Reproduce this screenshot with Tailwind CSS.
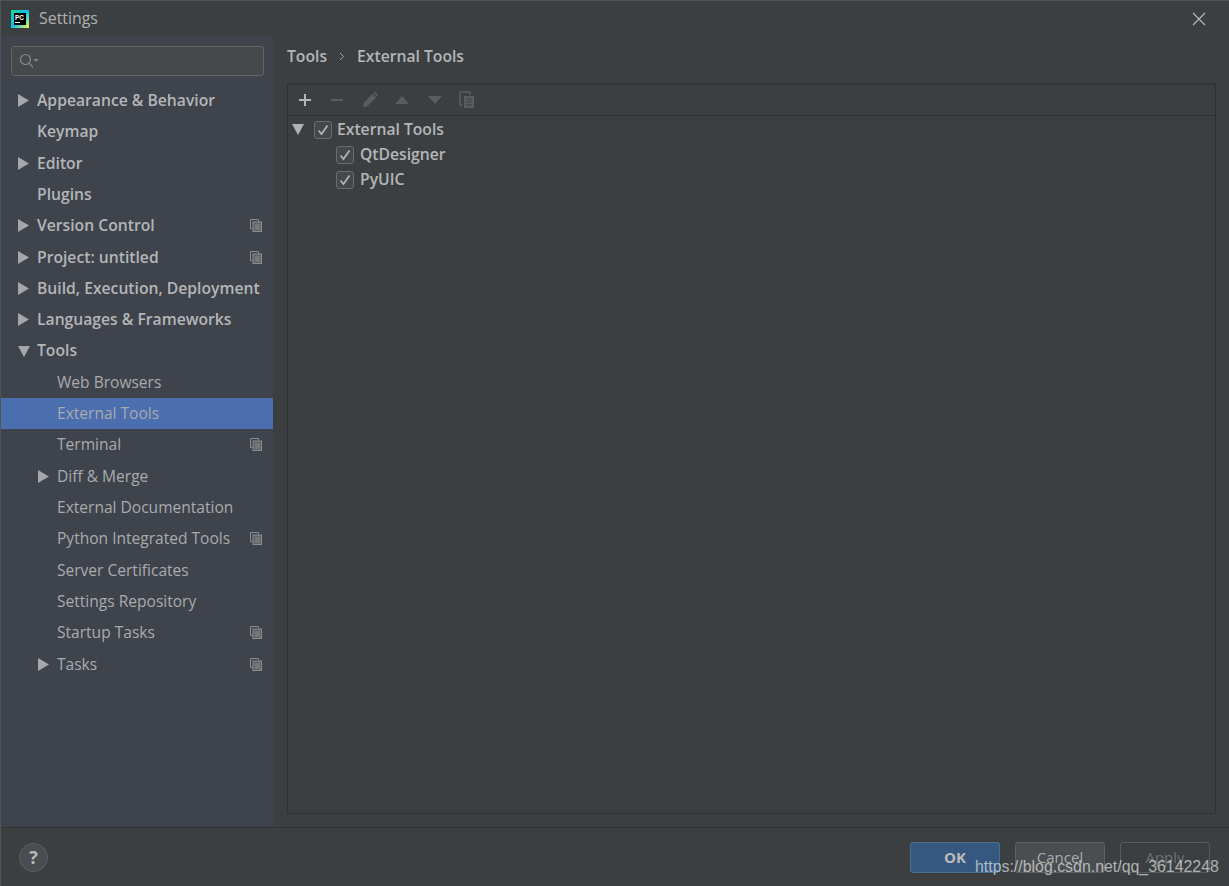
<!DOCTYPE html>
<html lang="en">
<head>
  <meta charset="UTF-8" />
  <title>Settings</title>
  <script src="https://cdn.jsdelivr.net/npm/@tailwindcss/browser@4"></script>
</head>
<body class="bg-[#3c3f41] font-['Open_Sans','Noto_Sans',sans-serif] text-[#bbbbbb] overflow-hidden">
  <div class="relative w-[1229px] h-[886px] flex flex-col border-l border-t border-[#505253]">
    <!-- title bar -->
    <div class="h-[35px] flex items-center pl-[10px] pr-[23px] shrink-0">
      <svg width="18" height="18" viewBox="0 0 18 18">
        <defs>
          <linearGradient id="pc" x1="0" y1="0" x2="1" y2="1">
            <stop offset="0" stop-color="#21d789" />
            <stop offset="0.5" stop-color="#07c3f2" />
            <stop offset="1" stop-color="#fcf84a" />
          </linearGradient>
        </defs>
        <rect width="18" height="18" fill="url(#pc)" />
        <rect x="3" y="3" width="12" height="12" fill="#000" />
        <rect x="4" y="12" width="5" height="1" fill="#fff" />
        <text x="4" y="9.500" font-size="6.500" font-weight="700" fill="#fff" font-family="Liberation Sans">PC</text>
      </svg>
      <span class="ml-[10px] pt-[1px] text-[15.900px] text-[#afb1b3]">Settings</span>
      <svg class="ml-auto" width="14" height="14" viewBox="0 0 14 14" stroke="#b4b6b8" stroke-width="1.200"><path d="M1 1l12 12M13 1L1 13" /></svg>
    </div>

    <div class="flex-1 flex min-h-0">
      <!-- sidebar -->
      <aside class="w-[272px] shrink-0 bg-[#3e434c] pt-[10px]">
        <div class="ml-[10px] mr-[9px] h-[30px] flex items-center px-[7px] rounded-[3px] border border-[#646464] bg-[#45494a]">
          <svg width="20" height="16" viewBox="0 0 20 16" fill="none" stroke="#85888b" stroke-width="1.200">
            <circle cx="6.500" cy="6.500" r="5" />
            <path d="M10 10l4 4.500" />
            <path d="M14.500 6h5l-2.500 3z" fill="#85888b" stroke="none" />
          </svg>
        </div>
        <ul id="nav" class="mt-[9.200px]"></ul>
      </aside>

      <!-- content -->
      <main class="flex-1 min-w-0 pl-[14px] pr-[13px] flex flex-col">
        <div class="h-[47px] pb-[6px] flex items-center text-[15.700px] font-semibold text-[#b4b6b8] shrink-0">
          <span>Tools</span>
          <svg class="mx-[12px]" width="6" height="9" viewBox="0 0 6 9" fill="none" stroke="#a0a2a4"><path d="M1 1l3.500 3.500L1 8" /></svg>
          <span>External Tools</span>
        </div>
        <div class="h-[731px] border border-[#2f3031] border-t-2 border-t-[#323334] flex flex-col">
          <div class="h-[31px] shrink-0 flex items-center border-b border-[#323232] pl-[9px]">
            <svg width="16" height="16" viewBox="0 0 16 16" fill="#b4b6b8"><path d="M7 2h2v5h5v2H9v5H7V9H2V7h5z" /></svg>
            <svg class="ml-[16px]" width="16" height="16" viewBox="0 0 16 16" fill="#5a5d5f"><rect x="2" y="7" width="12" height="2" /></svg>
            <svg class="ml-[16px]" width="18" height="18" viewBox="0 0 18 18" fill="#5a5d5f"><path d="M2 16l.8-4.200L11.500 3l3.500 3.500-8.700 8.700zM12.500 2l1.200-1.200 3.500 3.500L16 5.500z" /></svg>
            <svg class="ml-[15px]" width="16" height="10" viewBox="0 0 16 10" fill="#5a5d5f"><path d="M8 1l7 8H1z" /></svg>
            <svg class="ml-[17px]" width="16" height="10" viewBox="0 0 16 10" fill="#5a5d5f"><path d="M1 1h14l-7 8z" /></svg>
            <svg class="ml-[16px]" width="16" height="18" viewBox="0 0 16 18" fill="none" stroke="#5a5d5f" stroke-width="1.600"><path d="M3.500 14H1V1h10v3" /><rect x="5" y="5" width="10" height="12" fill="#5a5d5f" stroke="none" /><path d="M7 8h6M7 11h6M7 14h6" stroke="#3c3f41" stroke-width="1" /></svg>
          </div>
          <div class="pt-[1px] text-[15.700px] font-semibold text-[#b4b6b8]">
            <div class="h-[25px] flex items-center">
              <svg class="ml-[4px]" width="12" height="11" viewBox="0 0 12 11" fill="#afb1b3"><path d="M0 0h12L6 11z" /></svg>
              <span class="ml-[10px] w-[18px] h-[18px] rounded-[3px] border border-[#6b6b6b] bg-[#43494a] flex items-center justify-center"><svg width="12" height="12" viewBox="0 0 12 12" fill="none" stroke="#b0b2b4" stroke-width="1.800"><path d="M1.500 6.500l3 3.500 6-8.500" /></svg></span>
              <span class="ml-[5px]">External Tools</span>
            </div>
            <div class="h-[25px] flex items-center pl-[48px]">
              <span class="w-[18px] h-[18px] rounded-[3px] border border-[#6b6b6b] bg-[#43494a] flex items-center justify-center"><svg width="12" height="12" viewBox="0 0 12 12" fill="none" stroke="#b0b2b4" stroke-width="1.800"><path d="M1.500 6.500l3 3.500 6-8.500" /></svg></span>
              <span class="ml-[6px]">QtDesigner</span>
            </div>
            <div class="h-[25px] flex items-center pl-[48px]">
              <span class="w-[18px] h-[18px] rounded-[3px] border border-[#6b6b6b] bg-[#43494a] flex items-center justify-center"><svg width="12" height="12" viewBox="0 0 12 12" fill="none" stroke="#b0b2b4" stroke-width="1.800"><path d="M1.500 6.500l3 3.500 6-8.500" /></svg></span>
              <span class="ml-[6px]">PyUIC</span>
            </div>
          </div>
        </div>
      </main>
    </div>

    <!-- footer -->
    <footer class="h-[59px] shrink-0 border-t border-[#323232] flex items-center pl-[18px] pr-[19px] text-[15px]">
      <span class="w-[29px] h-[29px] rounded-full border border-[#5e6162] bg-[#4a4d4f] flex items-center justify-center text-[18px] font-bold text-[#b8babc]">?</span>
      <div class="ml-auto flex gap-[15px]">
        <button class="w-[90px] h-[31px] rounded-[3px] border border-[#4c708c] bg-[#365880] font-bold text-[#bbbbbb]">OK</button>
        <button class="w-[90px] h-[31px] rounded-[3px] border border-[#5e6060] bg-[#4b4e50] text-[#a9abad]">Cancel</button>
        <button class="w-[90px] h-[31px] rounded-[3px] border border-[#585a5c] text-[#6d7072]">Apply</button>
      </div>
    </footer>

    <!-- csdn watermark -->
    <span class="absolute left-[974px] top-[856px] font-['Liberation_Sans',sans-serif] text-[15.900px] leading-[20px] text-white/60">https://blog.csdn.net/qq_36142248</span>
  </div>

  <script>
    const items = [
      { t: 'Appearance & Behavior', top: true, arrow: 'r' },
      { t: 'Keymap', top: true },
      { t: 'Editor', top: true, arrow: 'r' },
      { t: 'Plugins', top: true },
      { t: 'Version Control', top: true, arrow: 'r', copy: true },
      { t: 'Project: untitled', top: true, arrow: 'r', copy: true },
      { t: 'Build, Execution, Deployment', top: true, arrow: 'r' },
      { t: 'Languages & Frameworks', top: true, arrow: 'r' },
      { t: 'Tools', top: true, arrow: 'd' },
      { t: 'Web Browsers' },
      { t: 'External Tools', sel: true },
      { t: 'Terminal', copy: true },
      { t: 'Diff & Merge', arrow: 'r' },
      { t: 'External Documentation' },
      { t: 'Python Integrated Tools', copy: true },
      { t: 'Server Certificates' },
      { t: 'Settings Repository' },
      { t: 'Startup Tasks', copy: true },
      { t: 'Tasks', arrow: 'r', copy: true },
    ];
    const arrows = {
      r: '<path d="M0 0l11 6.500L0 13z" />',
      d: '<path d="M0 1h12L6 12z" />',
    };
    const copyIcon = '<svg class="absolute left-[249px] top-[9px]" width="12" height="13" viewBox="0 0 12 13" fill="none" stroke="#8a8d90"><path d="M2.500 9.500H.5V.5h8v2" /><rect x="3" y="3" width="8.500" height="9.500" fill="#5f6265" /><path d="M5 6h5M5 8h5M5 10h5" /></svg>';
    document.getElementById('nav').innerHTML = items.map(i => {
      const rowCls = i.sel ? 'bg-[#4b6eaf]' : '';
      const left = i.top ? 36 : 56;
      const textCls = i.top ? 'font-semibold text-[15.700px] text-[#b4b6b8]' : 'text-[15.550px] text-[#a9abad]';
      const arrow = i.arrow
        ? `<svg class="absolute top-[9px]" style="left:${left - 19}px" width="12" height="14" viewBox="0 0 12 14" fill="#a5a7a9">${arrows[i.arrow]}</svg>`
        : '';
      return `<li class="relative h-[31.300px] flex items-center ${rowCls}">${arrow}<span class="${textCls}" style="margin-left:${left}px">${i.t.replace('&', '&amp;')}</span>${i.copy ? copyIcon : ''}</li>`;
    }).join('');
  </script>
</body>
</html>
